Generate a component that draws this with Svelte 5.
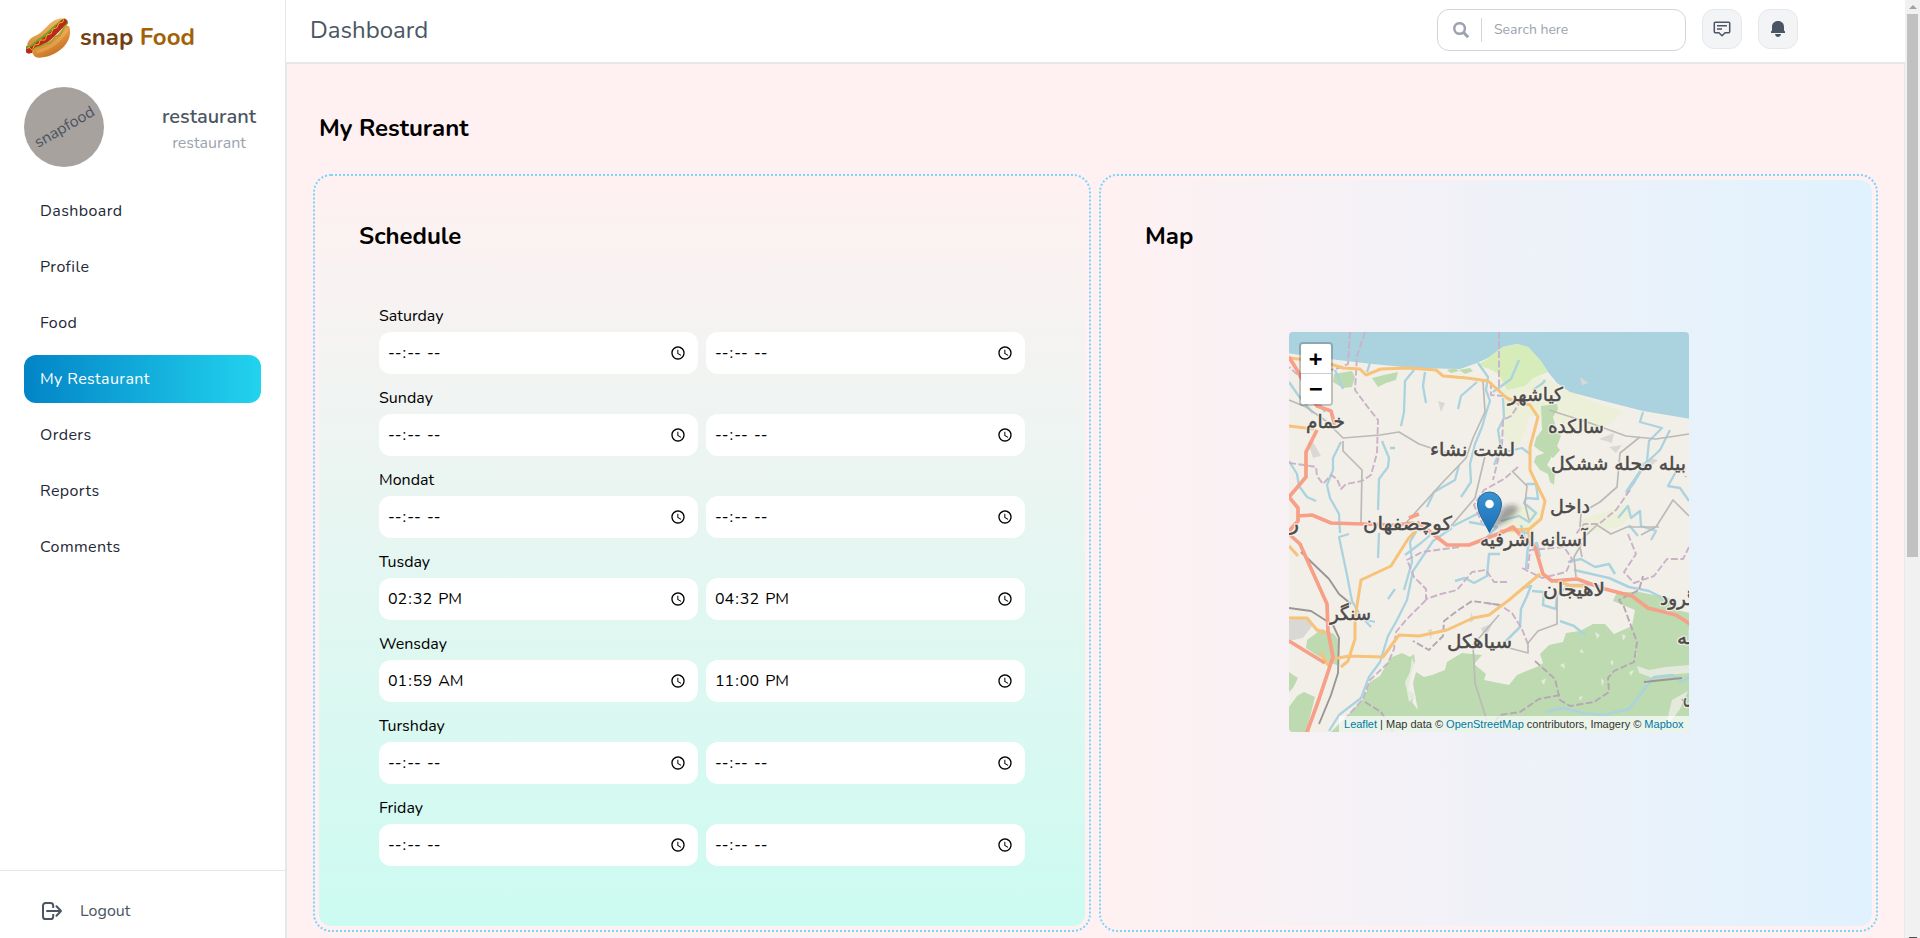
<script>
  const nav = ['Dashboard', 'Profile', 'Food', 'My Restaurant', 'Orders', 'Reports', 'Comments'];
  const current = 'My Restaurant';
  const schedule = [
    { day: 'Saturday', open: '', close: '' },
    { day: 'Sunday', open: '', close: '' },
    { day: 'Mondat', open: '', close: '' },
    { day: 'Tusday', open: '14:32', close: '16:32' },
    { day: 'Wensday', open: '01:59', close: '23:00' },
    { day: 'Turshday', open: '', close: '' },
    { day: 'Friday', open: '', close: '' }
  ];
  // Place names: left edge, baseline and width in map pixels.
  const places = [
    { name: 'خمام', x: 17, y: 96, w: 39 },
    { name: 'لشت نشاء', x: 141, y: 124, w: 85 },
    { name: 'کیاشهر', x: 219, y: 69, w: 55 },
    { name: 'سالکده', x: 259, y: 101, w: 56 },
    { name: 'بیله محله ششکل', x: 262, y: 138, w: 135 },
    { name: 'داخل', x: 261, y: 181, w: 40 },
    { name: 'کوچصفهان', x: 74, y: 198, w: 89 },
    { name: 'آستانه اشرفیه', x: 191, y: 214, w: 107 },
    { name: 'لاهیجان', x: 254, y: 264, w: 62 },
    { name: 'سنگر', x: 41, y: 288, w: 41 },
    { name: 'سیاهکل', x: 158, y: 316, w: 65 },
    { name: 'گرود', x: 371, y: 273, w: 36 },
    { name: 'ر', x: 0, y: 198, w: 10 },
    { name: 'له', x: 388, y: 312, w: 17 },
    { name: 'ش', x: 394, y: 370, w: 18 }
  ];
</script>

<div class="shell">
  <aside>
    <div class="brand">
      <svg width="44" height="40" viewBox="78 54 132 118">
        <defs>
          <linearGradient id="bun" x1="0" y1="0" x2=".6" y2="1">
            <stop offset="0" stop-color="#f3b866" /><stop offset=".55" stop-color="#e5963f" /><stop offset="1" stop-color="#bf6c20" />
          </linearGradient>
          <linearGradient id="back" x1="0" y1="0" x2="0" y2="1">
            <stop offset="0" stop-color="#f1b568" /><stop offset="1" stop-color="#d98a38" />
          </linearGradient>
        </defs>
        <path d="M82 138C80 122 92 112 112 103C136 91 148 62 174 56C188 53 199 56 200 64L182 88L116 142Z" fill="url(#back)" />
        <path d="M84 147C102 148 107 132 126 121C150 107 164 84 193 66" fill="none" stroke="#6aa52c" stroke-width="22" stroke-linecap="round" />
        <path d="M87 151C103 148 110 135 129 124C154 109 170 87 192 65" fill="none" stroke="#bc2819" stroke-width="18" stroke-linecap="round" />
        <path d="M82 145q6-8 10 0t9-5q0-9 9-7t8-8q1-9 10-6t10-9q1-9 9-8t9-9q1-9 9-9t9-10q2-8 9-7t8-10" fill="none" stroke="#f5b62b" stroke-width="3" />
        <path d="M97 156C92 145 110 140 125 134C154 123 171 105 187 86C195 76 207 71 209 84C213 105 206 128 184 146C164 163 139 172 116 172C105 172 99 165 97 156Z" fill="url(#bun)" />
        <path d="M114 154C148 145 180 121 200 90" fill="none" stroke="#ffcb7b" stroke-opacity=".3" stroke-width="9" stroke-linecap="round" />
        <path d="M100 148q8-8 15-8t14-6 15-5 15-12 14-10 14-16 13-13" fill="none" stroke="#8aa82e" stroke-width="4" />
      </svg>
      <p class="name"><span>snap</span> Food</p>
    </div>

    <div class="person">
      <div class="avatar"><span>snapfood</span></div>
      <div class="who"><strong>restaurant</strong><small>restaurant</small></div>
    </div>

    <nav>
      {#each nav as item}
        <a href="#top" class:active={item === current}>{item}</a>
      {/each}
    </nav>

    <div class="logout">
      <svg width="20" height="18" viewBox="0 0 20 18" fill="none" stroke="#4b5563" stroke-width="2">
        <path d="M11.2 6V3.6A2.6 2.6 0 0 0 8.600 1H3.600A2.600 2.600 0 0 0 1 3.600v10.800A2.600 2.600 0 0 0 3.600 17h5a2.600 2.600 0 0 0 2.600-2.600V12" />
        <path d="M5 9h14M14.500 4.300L19 9l-4.500 4.700" stroke-linejoin="round" stroke-linecap="round" />
      </svg>
      <span>Logout</span>
    </div>
  </aside>

  <div class="content">
    <header>
      <h5>Dashboard</h5>
      <div class="tools">
        <div class="search">
          <span class="lens">
            <svg width="16" height="16" viewBox="0 0 16 16" fill="none" stroke="#9ca3af" stroke-width="2.500">
              <circle cx="6.600" cy="6.500" r="5.300" /><path d="M10.400 10.300l4.700 4.900" stroke-width="3" />
            </svg>
          </span>
          <input type="search" placeholder="Search here" />
        </div>
        <button aria-label="messages">
          <svg width="18" height="16" viewBox="0 0 18 16" fill="none" stroke="#4b5563">
            <path d="M2.300 1.200h13.400a1 1 0 0 1 1 1v8.500a1 1 0 0 1-1 1h-3.600L9 14.700 5.900 11.700H2.300a1 1 0 0 1-1-1V2.200a1 1 0 0 1 1-1z" stroke-width="1.500" />
            <path d="M4 4.700h10M4 8h5" stroke-width="1.400" />
          </svg>
        </button>
        <button aria-label="notifications">
          <svg width="14" height="16" viewBox="0 0 14 16" fill="#4b5563">
            <path d="M0 12v-1.500l1-1V6.200C1 2.500 3.300.1 7 .1s6 2.400 6 6.100v3.300l1 1V12zM4 13.100h6c-.3 1.700-1.300 2.900-3 2.900s-2.700-1.200-3-2.900z" />
          </svg>
        </button>
      </div>
    </header>

    <main>
      <h2>My Resturant</h2>
      <div class="cards">
        <section class="hours">
          <h2>Schedule</h2>
          <form>
            {#each schedule as row}
              <div class="day">
                <span>{row.day}</span>
                <div class="pair">
                  <input type="time" value={row.open} aria-label="{row.day} open" />
                  <input type="time" value={row.close} aria-label="{row.day} close" />
                </div>
              </div>
            {/each}
          </form>
        </section>

        <section class="place">
          <h2>Map</h2>
          <div class="map">
            <svg class="tiles" width="400" height="400" viewBox="0 0 400 400">
              <defs>
                <linearGradient id="pin" x1="0" y1="0" x2="0" y2="1">
                  <stop offset="0" stop-color="#3a93d0" /><stop offset="1" stop-color="#1b6fb4" />
                </linearGradient>
                <filter id="soft"><feGaussianBlur stdDeviation=".7" /></filter>
                <filter id="shade" x="-50%" y="-50%" width="200%" height="200%"><feGaussianBlur stdDeviation="2.500" /></filter>
              </defs>
              <rect width="400" height="400" fill="#f2efe9" />
              <g filter="url(#soft)" fill="none" stroke-linejoin="round">
                <!-- sea, delta and plains -->
                <path fill="#edf0d8" d="M206 28L260 48 300 68 335 80 320 92 290 104 258 85 240 84 236 100 228 116 213 104 214 74zM215 185l18-12 18 6-6 20-28 4zM290 188l48-16 8 8-14 14-38 8z" />
                <path fill="#aad3df" d="M-2 21L24 25 74 31 124 36 171 37 188 31 201 25 214 15 228 12 239 15 251 28 259 40 268 51 281 60 311 68 354 79 402 87V-2H-2z" />
                <path fill="#d6edba" d="M201 24l13-9 14-3 11 3 12 13 8 12-15 6-8 8-18 4-8-16-16-8zM190 32l10-6 8 6-12 4z" />
                <!-- woodland -->
                <g fill="#bddab1">
                  <path d="M45 42l18-3 3 6-3 10-9 1-10-6zM83 46l12-3 14-3-2 8-10 3-8 4zM158 38l8-2 4 3-8 2zM170 38l11-2 3 3-8 3z" />
                  <path d="M252 74l16-2 1 5-5 8 4 14 4 5-4 10 3 4-7 8-14-8-5-4 2-8 6-8zM247 124l12-4 3 6-4 7 8 8-1 12-4-3-2-8-8-4-6-8z" />
                  <path d="M18 308l15-11 12 5 5 7v25l-10-4-11-6-12-8zM0 340l9 6-5 10-4 4zM8 364l7-4 11 5-3 12-6 24H0v-26z" />
                  <path d="M40 402l18-18 17-18 6-16 10-6 10-18 12-5 8 4 4-3 1 7-4 13-3 16 7 5-3 7 6 8-3-15-2-12 3-11 8 5 8-2 13-5 2-8 15-9 20 2-8 9 12 10-2 6 25 5 8-10 22-9 4-3-3-9 9-9 14-3 3-9 14-2 13-7h12l9 10 18-8 3-16-22-9 4-9 22 0 30 6 8 12 42 10 28 30v55l-28 2-22-6-4 4 10 12 8-2 7 8 18-4 11-2v46z" />
                </g>
                <g fill="#f2efe9" fill-opacity=".75">
                  <path d="M271 333l4-2 1 6zM290 320l3-3 2 4zM321 330l3-2v6zM333 302l4 2-3 5zM252 349l5-3-2 7zM312 346l3 3-2 6zM345 321l3-1-1 5zM290 365l4-1-3 5zM306 300l5 3-3 4zM340 340l5-2-3 6zM357 348l4 1-4 3z" />
                  <path d="M123 325l4 12-5 14 5 14-7 5-4-20 5-10zM348 334l12 4 17-3 23-2v8l-22 2-14 3-14-5zM383 368l16-9-8 18-14 19 3-16z" />
                </g>
                <!-- towns -->
                <path fill="#dad8d5" d="M0 288l15-3 9 8-10 13-14 3zM19 110l4-2 9 16-8 2zM149 69l7 2-4 9zM320 115l13-2-6 8zM291 45l8 6-6 2zM310 107l15-6-2 10zM139 298l4-1-1 11zM182 280l3 8-4 3zM192 296l12-5-8 15zM352 132l10-6 7 2-9 8z" />
                <!-- rivers -->
                <g stroke="#aad3df" stroke-width="2.300">
                  <path d="M0 50l9 13 15 18M24 62l10 15 2 3M46 38l6 14 2 5M81 31l-3 9M125 38l-9 11-1 31-3 14M136 40l-2 14 3 17M189 31l10 14-2 13 4 11-4 12-4 14-7 17-5 20 1 18-10 15M188 50l-16 14-3 13M0 129l8 13 2 12 8 11 9 4M52 110l-8 16v12l-6 15 3 13 9 16 1 19M93 109l7 17-1 9-9 12-1 31M101 116l5 0M170 133l-4 15-21 12-7 15M230 28l-8 19-18 13M244 58l10-7 2-3M214 66l1 20-6 12 3 18-7 17" />
                  <path d="M354 80l-3 10 22 6-13 13-2 20-12 20-9 13M381 98l-10 20-15 14-19 28M215 120l18-4 8 6M237 152l10 0 2 15-12-1-2 5 12 10-7 9-10-6-18 5M397 136l-8 0-10 18 12 2 9 13M329 186l10-12 3 12 9-7 1 15 15 5-5 9M340 193l9 11" />
                  <path d="M164 194l30-15M180 190l28 5-12 12M60 202l-10 3 8 38 5 26 8 14 11 12M90 201l-1 25M69 286l17 4M106 257l-7 10M163 196l-19 13-20 30-6 29-10 20-9 16-8 26-11 15-8 21-22 17-10 16M128 198l-7 12 2 20-8 28M146 199l-14 12-16 12" />
                  <path d="M211 222l-11 0-2 22-13 7-9-5-10 3M222 195l18 7-3 35M232 193l6 21 10-3 3 14M233 256l9-2-4 10-6 13-1 18-17 17M243 259l12 1-1 13 13 4 1-14 12-10 24 0M279 230l13-3 14 8 14-3 6 10M285 238l35 8 20 9 20 4 20 10M271 289l14 5 11 9M257 380l17-4 19 5 22 2 25-6 25-32 18-2 10 7 14-10" stroke-width="2.500" />
                </g>
                <!-- administrative borders -->
                <g stroke="#cbb2c9" stroke-width="1.900" stroke-dasharray="7 2.500">
                  <path d="M61 0l-2 32-9 4-39 9-11-10M76 0l-8 24-2 34 15 20 8 10-1 33-6 22-9 6-16 3-5 5-4-10-6-4-8 9-6-8-1-9-12-2-15-2M210 0v60M202 50v13l14 1 14 8-8 12-8 4-1 26-4 14-5 20M229 135l-14 12-20 11-10 15 8 18M341 158l-14 20-17 14-15 0-8 10M391 136l6 9" />
                  <path d="M170 215l-37 5-15 8 7 17 12 12v10l15-5 16-4 15-18 14-2 8 12h15M137 268l-20 20-10 12-2 17-6 14-18 17-7 19-18 20M233 236l20 10 24-6 6-13-8-12-34 3-2 19M339 202l8 20-12 18 10 11 20-7 13-17 16 0 6-12M197 271l14 2 12 8 10 16 7 18" />
                  <path d="M211 273l-28-4-15 10-13 10-1 15-14 14-16-9M76 370l16 10 12 20M246 329l20 18 5 21 10 6 24-4 15-10-1-14 6-7 20-9 3-20-13-35-5-7 20-10 4-14M271 363l-21 4-19 13-20 3-8 10M393 367l7 9" stroke="#b5a8b4" />
                </g>
                <!-- railways and minor roads -->
                <g stroke="#bcbab8" stroke-width="1.700">
                  <path d="M0 68l17 7 20 14 17 17 37-3 19-3 20 12 33 11M54 109l0 10 19 19-1 53M116 192l38-42 23-24 7-20 12-26-2-31M196 124l-10 42-24 28M260 78l41 13 36 13 30 3 33-5M351 105l-20 16-3 34-17 15-19 11-1 14M223 139l15 15-2 18 4 16M293 225l-3-15 18-17 14 9 16-7 32 0M352 203l15-8 17-27 16 16M287 245l-2-20 8-14M268 264v28l-19 7-10 12 0 10-30-8M210 283l-26 30 2 38 12 38" />
                  <path d="M0 276l22 3 22 14 6 13-1 35-7 22-12 29M12 220l28 27 10 15 12 10M355 350l38-4" stroke="#999693" stroke-width="1.900" />
                </g>
                <!-- secondary roads -->
                <g stroke="#f7c27a" stroke-width="3">
                  <path d="M0 26l18 2 20 3 16 5 17 1 6 6 15-6 27-1 28 2 7 6 24 2 21 3 20 18 22 6 8 12-8 30 0 23 10 21 5 10-4 18-13 11 3 10M0 94l25 3M128 197l-9 10-17 27-30 14-6 38v21l-7 22-7 6M0 286l18 0 10 12 9 3M0 214l9 10M251 242l-12 10-19 16-20 15-16 3-26 12-28 6-20-1-16 22-34-1-16 3-5 6-8-13M263 248l20 6 16 0" />
                  <path d="M239 197l-28 2" />
                </g>
                <!-- trunk roads -->
                <g stroke="#f79f87" stroke-width="3.700">
                  <path d="M0 25l8 13 20 36 14 5 4 15M28 98L17 120v25L0 165l9 11 0 13-9 10M9 184l14-1 19 8 63 2 20-2M0 202l11 10 27 60 1 27 5 26-14 42-13 36M0 309l36 22M120 186l10-4" />
                  <path d="M128 190l12 9 18 14 22 0 34-13 10-5 10 11 12 9 8 27 9 7 25-2 28 10 27 7 16 12 28 7 25 16" />
                </g>
              </g>
              <g class="labels">
                {#each places as p}
                  <text class="halo" x={p.x} y={p.y} textLength={p.w} lengthAdjust="spacingAndGlyphs" aria-hidden="true">{p.name}</text>
                  <text x={p.x} y={p.y} textLength={p.w} lengthAdjust="spacingAndGlyphs">{p.name}</text>
                {/each}
              </g>
              <path d="M200 198l14-22c5-4 16-4 15 1-2 7-16 16-29 21z" fill="#222" fill-opacity=".4" filter="url(#shade)" />
              <path d="M200.500 200.500C196 191 188.500 181.500 188.500 172a12 12 0 0 1 24 0c0 9.500-7.500 19-12 28.500z" fill="url(#pin)" stroke="#2467a1" />
              <circle cx="200.500" cy="172" r="4.300" fill="#fff" />
            </svg>
            <div class="zoom"><button>+</button><button>−</button></div>
            <div class="credit"><a href="#top">Leaflet</a> | Map data © <a href="#top">OpenStreetMap</a> contributors, Imagery © <a href="#top">Mapbox</a></div>
          </div>
        </section>
      </div>
    </main>
  </div>

  <div class="scrollbar">
    <i class="up"></i>
    <i class="thumb"></i>
    <i class="down"></i>
  </div>
</div>

<style>
  :global(body) { margin: 0; overflow: hidden; }
  .shell, .shell :global(*) { box-sizing: border-box; }
  .shell { display: flex; width: 1920px; height: 938px; overflow: hidden; background: #fff; color: #000; font: 16px/24px Nunito, sans-serif; }
  h2, h5, p { margin: 0; }
  h2 { font-size: 24px; line-height: 32px; font-weight: 700; }
  a { text-decoration: none; }
  button { padding: 0; }

  aside { display: flex; flex-direction: column; width: 286px; border-right: 1px solid #e5e7eb; }
  .brand { display: flex; align-items: center; gap: 10px; height: 76px; padding-left: 26px; }
  .brand .name { font-size: 24px; line-height: 32px; font-weight: 700; color: #a16207; padding-bottom: 2px; }
  .brand .name span { color: #713f12; }
  .person { display: flex; align-items: center; justify-content: space-between; height: 80px; margin-top: 11px; padding: 0 29px 0 24px; }
  .avatar { display: flex; align-items: center; justify-content: center; width: 80px; height: 80px; border-radius: 50%; background: #a8a29e; color: #4b5563; }
  .avatar span { transform: rotate(-30deg); }
  .who { display: flex; flex-direction: column; align-items: center; padding-top: 4px; }
  .who strong { font-size: 20px; line-height: 28px; font-weight: 600; color: #4b5563; }
  .who small { font-size: 16px; line-height: 24px; color: #9ca3af; }
  nav { display: flex; flex-direction: column; gap: 8px; padding: 20px 24px 0; }
  nav a { display: flex; align-items: center; height: 48px; padding-left: 16px; border-radius: 12px; color: #1f2937; letter-spacing: .4px; }
  nav a.active { background: linear-gradient(to right, #0284c7, #22d3ee); color: #fff; }
  .logout { display: flex; align-items: center; gap: 18px; height: 68px; margin-top: auto; padding: 12px 0 0 42px; border-top: 1px solid #e5e7eb; color: #4b5563; }

  .content { flex: 1; display: flex; flex-direction: column; min-width: 0; }
  header { display: flex; align-items: center; justify-content: space-between; height: 64px; padding: 0 107px 2px 24px; border-bottom: 2px solid #e5e7eb; }
  h5 { font-size: 24px; line-height: 32px; font-weight: 400; color: #4b5563; }
  .tools { display: flex; gap: 16px; }
  .search { display: flex; align-items: center; width: 249px; height: 42px; border: 1px solid #d1d5db; border-radius: 12px; overflow: hidden; }
  .lens { display: flex; align-items: center; width: 44px; height: 24px; padding-left: 15px; border-right: 1px solid #d1d5db; }
  .search input { width: 180px; border: 0; padding: 0 0 0 12px; outline: 0; font: 14px/20px Nunito, sans-serif; }
  .search input::placeholder { color: #9ca3af; opacity: 1; }
  .tools button { display: flex; align-items: center; justify-content: center; width: 40px; height: 40px; border: 1px solid #e5e7eb; border-radius: 12px; background: #f3f4f6; }

  main { flex: 1; padding: 48px 32px 0; border: solid #e5e7eb; border-width: 0 1px; background: #fff1f2; }
  main > h2 { height: 68px; }
  .cards { display: grid; grid-template-columns: 766px 1fr; gap: 20px; height: 746px; }
  section { outline: 2px dotted #7dd3fc; outline-offset: 4px; border-radius: 12px; padding: 40px; }
  .hours { background: linear-gradient(to bottom, #fff1f2, #ccfbf1); }
  .place { background: linear-gradient(to right, #fff1f2, #e0f2fe); }
  form { display: flex; flex-direction: column; gap: 12px; padding: 52px 20px 0; }
  .day { display: flex; flex-direction: column; gap: 4px; }
  .pair { display: grid; grid-template-columns: 1fr 1fr; gap: 8px; }
  .pair input { width: 100%; height: 42px; padding: 8px; border: 0; border-radius: 12px; background: #fff; color: #000; font: 16px/24px Nunito, sans-serif; }
  .pair input::-webkit-datetime-edit-ampm-field { margin-left: 2px; }

  .map { position: relative; width: 400px; height: 400px; margin: 80px auto 0; border-radius: 4px; overflow: hidden; }
  .tiles { display: block; }
  .labels text { font: 19px "DejaVu Sans", sans-serif; fill: #4c4a48; stroke: #4c4a48; stroke-width: .5px; }
  .labels .halo { fill: #f4f1ec; stroke: #f4f1ec; stroke-width: 3px; stroke-opacity: .85; stroke-linejoin: round; }
  .zoom { position: absolute; left: 10px; top: 10px; border: 2px solid rgba(0, 0, 0, .2); border-radius: 4px; background-clip: padding-box; overflow: hidden; }
  .zoom button { display: block; width: 30px; height: 30px; border: 0; background: #fff; color: #000; font: bold 22px/30px "DejaVu Sans Mono", monospace; }
  .zoom button:first-child { border-bottom: 1px solid #ccc; }
  .credit { position: absolute; right: 0; bottom: 0; height: 16px; padding: 0 5px; background: rgba(255, 255, 255, .7); color: #333; font: 11px/16px "Liberation Sans", sans-serif; white-space: nowrap; }
  .credit a { color: #0078a8; }

  .scrollbar { display: flex; flex-direction: column; align-items: center; width: 15px; background: #f1f1f1; }
  .up { width: 0; height: 0; margin: 5px 0; border: solid transparent; border-width: 0 4px 4px; border-bottom-color: #a3a3a3; }
  .thumb { width: 11px; height: 543px; background: #c1c1c1; }
  .down { width: 8px; height: 1px; margin-top: auto; background: #505050; }
</style>
